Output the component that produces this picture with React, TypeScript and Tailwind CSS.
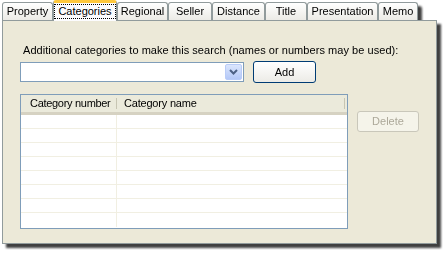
const tabs = [
  { label: 'Property', w: 'w-[51px]' },
  { label: 'Categories', w: 'w-[64px]', active: true },
  { label: 'Regional', w: 'w-[51px]' },
  { label: 'Seller', w: 'w-[44px]' },
  { label: 'Distance', w: 'w-[53px]' },
  { label: 'Title', w: 'w-[42px]' },
  { label: 'Presentation', w: 'w-[71px]' },
  { label: 'Memo', w: 'w-[40px]' },
]

const rows = [0, 1, 2, 3, 4, 5, 6, 7]

export default function App() {
  return (
    <div className="w-[448px] h-[256px] bg-white font-['Liberation_Sans',Arial,sans-serif] text-[11px] text-black">
      <div className="pl-[2px] w-[437px] drop-shadow-[4px_4px_1px_rgba(0,0,0,0.75)]">
        {/* tab strip */}
        <div className="flex items-end h-[20px]">
          {tabs.map((t) =>
            t.active ? (
              <div
                key={t.label}
                className={`${t.w} h-[21px] -mb-px relative z-10 flex items-center justify-center bg-[#fcfcfe] border-x border-[#919b9c] rounded-t-[3px] border-t-[3px] border-t-[#ffc83c]`}
              >
                <span className="px-[3px] leading-[13px] outline-1 outline-dotted outline-black -mt-[1px]">
                  {t.label}
                </span>
              </div>
            ) : (
              <div
                key={t.label}
                className={`${t.w} h-[18px] flex items-center justify-center border border-b-0 border-[#919b9c] rounded-t-[3px] bg-gradient-to-b from-white to-[#ecebe6]`}
              >
                {t.label}
              </div>
            ),
          )}
        </div>

        {/* tab page */}
        <div className="h-[224px] bg-[#ece9d8] border border-[#919b9c] pl-[17px] pt-[23px]">
          <div className="pl-[3px] leading-[13px] tracking-[0.05px]">
            Additional categories to make this search (names or numbers may be used):
          </div>

          <div className="flex items-center mt-[4px]">
            <div className="w-[224px] h-[20px] bg-white border border-[#7f9db9] flex justify-end p-[1px]">
              <div className="w-[17px] h-[16px] rounded-[2px] border border-[#b9ccf8] bg-gradient-to-b from-[#dbe6fd] to-[#b4c8f7] flex items-center justify-center">
                <svg width="9" height="6" viewBox="0 0 9 6">
                  <path d="M1 1 L4.5 4.5 L8 1" fill="none" stroke="#4d6185" strokeWidth="2" />
                </svg>
              </div>
            </div>
            <button className="ml-[9px] w-[63px] h-[22px] rounded-[3px] border border-[#003c74] bg-gradient-to-b from-white to-[#ecebe6] flex items-center justify-center">
              Add
            </button>
          </div>

          <div className="flex mt-[11px]">
            <div className="w-[328px] h-[135px] bg-white border border-[#7f9db9]">
              <div className="h-[20px] flex bg-[#ebeadb] border-b-[3px] border-[#d6d2c2]">
                <div className="w-[96px] flex items-center pl-[9px] tracking-[-0.3px] border-r border-[#c7c5b2] my-[3px]">
                  Category number
                </div>
                <div className="w-[228px] flex items-center pl-[7px] tracking-[-0.2px] border-r border-[#c7c5b2] my-[3px]">
                  Category name
                </div>
              </div>
              {rows.map((r) => (
                <div key={r} className={`h-[14px] flex ${r < 7 ? 'border-b border-[#f1efe2]' : ''}`}>
                  <div className="w-[96px] border-r border-[#f1efe2]" />
                </div>
              ))}
            </div>
            <button
              disabled
              className="ml-[9px] mt-[17px] w-[62px] h-[21px] rounded-[3px] border border-[#c9c7ba] bg-[#f5f4ea] text-[#aca899] flex items-center justify-center"
            >
              Delete
            </button>
          </div>
        </div>
      </div>
    </div>
  )
}
